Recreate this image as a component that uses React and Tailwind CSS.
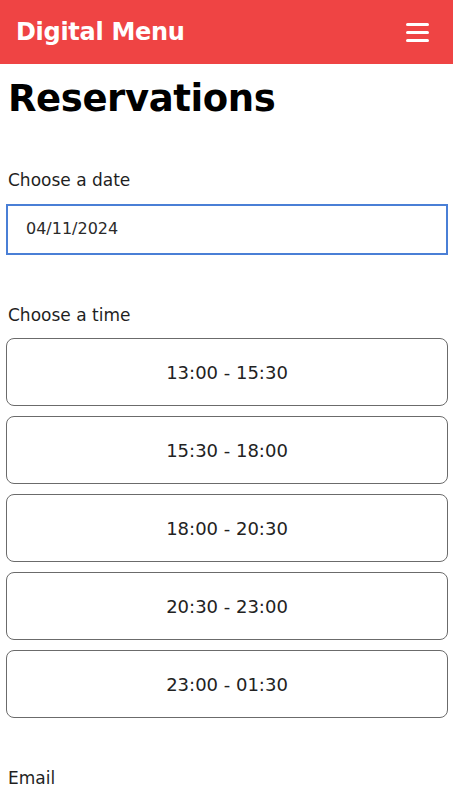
import React from 'react';

const slots = ['13:00 - 15:30', '15:30 - 18:00', '18:00 - 20:30', '20:30 - 23:00', '23:00 - 01:30'];

export default function App() {
  return (
    <div className="min-h-screen bg-white font-['DejaVu_Sans',sans-serif] text-[#1f1f1f]">
      <header className="h-16 bg-[#ef4444] flex items-center justify-between pl-4 pr-6">
        <span className="text-white text-[24px] font-semibold tracking-[-0.3px]">Digital Menu</span>
        <button className="flex flex-col gap-[5px]">
          <span className="block w-[23px] h-[3px] bg-white rounded-sm" />
          <span className="block w-[23px] h-[3px] bg-white rounded-sm" />
          <span className="block w-[23px] h-[3px] bg-white rounded-sm" />
        </button>
      </header>

      <main className="pl-[6px] pr-[5px]">
        <h1 className="pl-[2px] mt-[12px] text-[37px] font-bold text-black leading-[46px] tracking-[-0.4px]">Reservations</h1>

        <label className="block pl-[2px] mt-[46px] text-[17px]">Choose a date</label>
        <div className="mt-[10px] h-[51px] border-2 border-[#4a7fd6] flex items-center pl-[18px] text-[16px] text-[#2a2a2a]">
          04/11/2024
        </div>

        <label className="block pl-[2px] mt-[48px] text-[17px]">Choose a time</label>
        <div className="mt-[10px] flex flex-col gap-[10px]">
          {slots.map((s) => (
            <button
              key={s}
              className="h-[68px] w-full rounded-lg border border-[#6b6b6b] bg-white text-[18px] text-[#222]"
            >
              {s}
            </button>
          ))}
        </div>

        <label className="block pl-[2px] mt-[48px] text-[17px]">Email</label>
      </main>
    </div>
  );
}
